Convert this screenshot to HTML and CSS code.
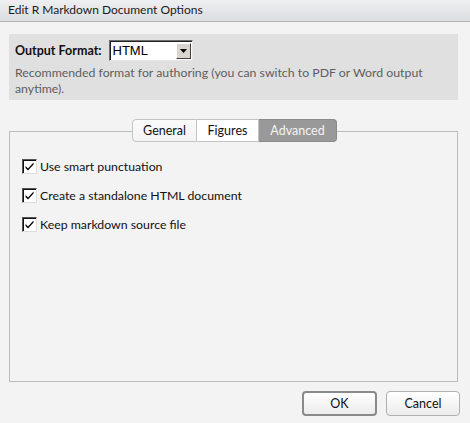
FILE: index.html
```html
<!DOCTYPE html>
<html>
<head>
<meta charset="utf-8">
<link rel="stylesheet" href="styles.css">
</head>
<body>
<div class="dialog">
  <div class="titlebar">Edit R Markdown Document Options</div>
  <div class="content">
    <div class="format-panel">
      <div class="format-row">
        <span class="format-label">Output Format:</span>
        <div class="select">
          <span class="select-value">HTML</span>
          <span class="select-btn"><svg width="7" height="4" viewBox="0 0 7 4"><path d="M0 0H7L3.5 4Z" fill="#000"/></svg></span>
        </div>
      </div>
      <div class="format-desc">Recommended format for authoring (you can switch to PDF or Word output anytime).</div>
    </div>
    <div class="tabset">
      <div class="tabs">
        <div class="tab tab-first">General</div>
        <div class="tab tab-mid">Figures</div>
        <div class="tab tab-active">Advanced</div>
      </div>
      <div class="tab-panel">
        <label class="check"><span class="box"><svg width="11" height="11" viewBox="0 0 11 11"><path d="M1.5 5 L4 7.5 L9.5 1.5 L9.5 3.5 L4 9.5 L1.5 7 Z" fill="#000"/></svg></span>Use smart punctuation</label>
        <label class="check"><span class="box"><svg width="11" height="11" viewBox="0 0 11 11"><path d="M1.5 5 L4 7.5 L9.5 1.5 L9.5 3.5 L4 9.5 L1.5 7 Z" fill="#000"/></svg></span>Create a standalone HTML document</label>
        <label class="check"><span class="box"><svg width="11" height="11" viewBox="0 0 11 11"><path d="M1.5 5 L4 7.5 L9.5 1.5 L9.5 3.5 L4 9.5 L1.5 7 Z" fill="#000"/></svg></span>Keep markdown source file</label>
      </div>
    </div>
    <div class="buttons">
      <button class="btn btn-default">OK</button>
      <button class="btn">Cancel</button>
    </div>
  </div>
</div>
</body>
</html>
```
FILE: styles.css
```css
html, body {
  margin: 0;
  padding: 0;
}
body {
  width: 470px;
  height: 423px;
  background: #f2f3f2;
  font-family: "Lato", "Noto Sans", sans-serif;
  font-size: 12px;
  color: #000;
  overflow: hidden;
}
.titlebar {
  height: 21px;
  line-height: 20px;
  padding-left: 8px;
  background: linear-gradient(#eeeff0, #dcdde0);
  border-bottom: 1px solid #b4b4b4;
  color: #1a1a1a;
}
.content {
  padding: 12px 10px 0 9px;
}
.format-panel {
  width: 449px;
  height: 66px;
  box-sizing: border-box;
  background: #e0e0e0;
  padding: 6px 6px 0 6px;
}
.format-row {
  display: flex;
  align-items: center;
  gap: 7px;
}
.format-label {
  font-weight: bold;
  font-size: 12.5px;
  color: #111;
}
.select {
  display: flex;
  width: 84px;
  height: 21px;
  box-sizing: border-box;
  border: 1px solid #6d6d6d;
  border-right-color: #e6e6e6;
  border-bottom-color: #e6e6e6;
  background: #fff;
  box-shadow: inset 1px 1px 0 #222;
}
.select-value {
  flex: 1;
  padding-left: 3px;
  line-height: 19px;
  font-family: "Liberation Sans", sans-serif;
  font-size: 13px;
}
.select-btn {
  width: 15px;
  margin: 2px 1px 1px 0;
  background: #d8d5cf;
  border: 1px solid #fff;
  border-right-color: #404040;
  border-bottom-color: #404040;
  box-sizing: border-box;
  display: flex;
  align-items: center;
  justify-content: center;
}
.format-desc {
  margin-top: 4px;
  color: #5e5e5e;
  line-height: 16px;
  font-size: 12.3px;
}
.tabset {
  margin-top: 19px;
  width: 449px;
}
.tabs {
  display: flex;
  justify-content: center;
  position: relative;
  z-index: 1;
  margin-bottom: -11px;
  padding-left: 2px;
}
.tab {
  height: 23px;
  box-sizing: border-box;
  line-height: 21px;
  text-align: center;
  background: #fff;
  border: 1px solid #c4c4c4;
  border-left: none;
  color: #111;
  font-size: 12.5px;
}
.tab-first {
  border-left: 1px solid #c4c4c4;
  border-radius: 4px 0 0 4px;
  background: linear-gradient(#fafafa, #f4f4f4);
  width: 65px;
}
.tab-mid {
  width: 62px;
}
.tab-active {
  background: #999;
  border-color: #8a8a8a;
  color: #f4f4f4;
  border-radius: 0 4px 4px 0;
  width: 78px;
}
.tab-panel {
  height: 251px;
  box-sizing: border-box;
  border: 1px solid #bcbcbc;
  padding: 27px 0 0 12px;
  display: flex;
  flex-direction: column;
  gap: 14px;
}
.check {
  display: flex;
  align-items: center;
  height: 15px;
  gap: 3px;
  color: #111;
  font-size: 12.3px;
}
.box {
  width: 15px;
  height: 15px;
  box-sizing: border-box;
  border: 1px solid #555;
  border-right-color: #ddd;
  border-bottom-color: #ddd;
  box-shadow: inset 1px 1px 0 #111;
  background: #fff;
  display: flex;
  align-items: center;
  justify-content: center;
}
.buttons {
  display: flex;
  justify-content: flex-end;
  gap: 9px;
  margin-top: 9px;
}
.btn {
  width: 74px;
  height: 25px;
  font-family: inherit;
  font-size: 12.5px;
  color: #111;
  background: linear-gradient(#ffffff, #ececec);
  border: 1px solid #b0b0b0;
  border-radius: 4px;
  padding: 0;
}
.btn-default {
  border: 2px solid #8a8a8a;
  width: 75px;
}
```
